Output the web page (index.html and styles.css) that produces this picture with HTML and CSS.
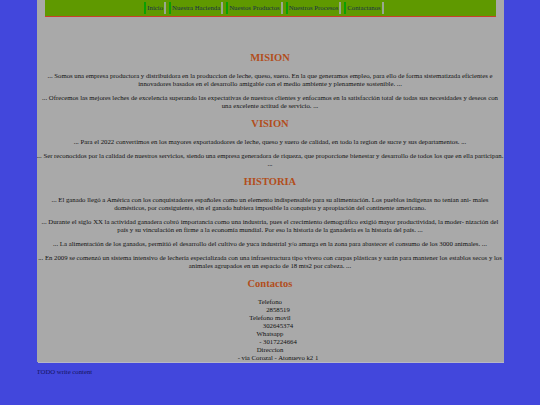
FILE: index.html
```html
<!DOCTYPE html>
<html lang="es">
<head>
<meta charset="utf-8">
<title>Hacienda</title>
<link rel="stylesheet" href="styles.css">
</head>
<body>
<div class="page">
  <nav class="nav">
    <a class="nav-link" href="#">Inicio</a>
    <a class="nav-link" href="#">Nuestra Hacienda</a>
    <a class="nav-link" href="#">Nuestos Productos</a>
    <a class="nav-link" href="#">Nuestros Procesos</a>
    <a class="nav-link" href="#">Contactanos</a>
  </nav>
  <main class="main">
    <h2 class="title">MISION</h2>
    <p class="text">... Somos una empresa productora y distribuidora en la produccion de leche, queso, suero. En la que generamos empleo, para ello de forma sistematizada eficientes e innovadores basados en el desarrollo amigable con el medio ambiente y plenamente sostenible. ...</p>
    <p class="text">... Ofrecemos las mejores leches de excelencia superando las expectativas de nuestros clientes y enfocamos en la satisfacción total de todas sus necesidades y deseos con una excelente actitud de servicio. ...</p>
    <h2 class="title">VISION</h2>
    <p class="text">... Para el 2022 convertimos en los mayores exportadodores de leche, queso y suero de calidad, en todo la region de sucre y sus departamentos. ...</p>
    <p class="text">... Ser reconocidos por la calidad de nuestros servicios, siendo una empresa generadora de riqueza, que proporcione bienestar y desarrollo de todos los que en ella participan. ...</p>
    <h2 class="title">HISTORIA</h2>
    <p class="text">... El ganado llegó a América con los conquistadores españoles como un elemento indispensable para su alimentación. Los pueblos indígenas no tenían ani- males domésticos, por consiguiente, sin el ganado hubiera imposible la conquista y apropiación del continente americano.</p>
    <p class="text">... Durante el siglo XX la actividad ganadera cobró importancia como una industria, pues el crecimiento demográfico exigió mayor productividad, la moder- nización del país y su vinculación en firme a la economía mundial. Por eso la historia de la ganadería es la historia del país. ...</p>
    <p class="text">... La alimentación de los ganados, permitió el desarrollo del cultivo de yuca industrial y/o amarga en la zona para abastecer el consumo de los 3000 animales. ...</p>
    <p class="text">... En 2009 se comenzó un sistema intensivo de lechería especializada con una infraestructura tipo vivero con carpas plásticas y sarán para mantener los establos secos y los animales agrupados en un espacio de 18 mts2 por cabeza. ...</p>
    <h2 class="title">Contactos</h2>
    <div class="contacts">
      <div class="c-label">Telefono</div>
      <div class="c-value">2858519</div>
      <div class="c-label">Telefono movil</div>
      <div class="c-value">302645374</div>
      <div class="c-label">Whatsapp</div>
      <div class="c-value">- 3017224664</div>
      <div class="c-label">Direccion</div>
      <div class="c-value">- via Corozal - Atonuevo k2 1</div>
    </div>
  </main>
</div>
<p class="footer">TODO write content</p>
</body>
</html>
```
FILE: styles.css
```css
html {
  background: #4247dc;
}
body {
  width: 467px;
  margin: 0 auto;
  font-family: "Liberation Serif", "Times New Roman", serif;
  font-size: 6.75px;
  line-height: 8px;
  color: #111111;
}
.page {
  background: #a9a9a9;
  box-shadow: 1px 1px 0 #b6b6c6;
}
.nav {
  margin: 0 8px;
  padding-right: 12px;
  height: 16px;
  background: #5f9900;
  border-bottom: 1px solid #c8402a;
  display: flex;
  justify-content: center;
  align-items: center;
  gap: 3px;
}
.nav-link {
  color: #1a2f4a;
  text-decoration: none;
  border-left: 2px solid #0aa000;
  border-right: 2px solid #9aa890;
  padding: 2px 1px;
  line-height: 8px;
}
.main {
  padding-top: 27px;
  text-align: center;
}
.title {
  font-size: 10.5px;
  line-height: 12px;
  font-weight: bold;
  color: #b24e1c;
  margin: 8px 0;
}
.text {
  margin: 6px 0;
}
.contacts {
  display: flex;
  flex-direction: column;
  align-items: center;
}
.c-value {
  padding-left: 16px;
}
.footer {
  margin: 6px 0 0 0;
  color: #141460;
}
```
